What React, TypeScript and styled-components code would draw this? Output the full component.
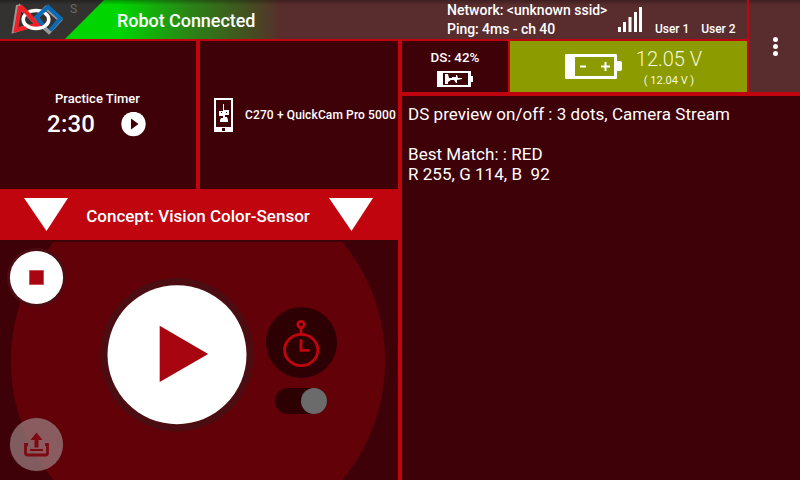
import React from "react";
import styled, { createGlobalStyle } from "styled-components";

const red = "#c0050f";
const dark = "#3f0108";
const brown = "#592c2d";

const GlobalStyle = createGlobalStyle`
  * { box-sizing: border-box; }
  body { margin: 0; background: ${dark}; }
`;

const Screen = styled.div`
  width: 800px;
  height: 480px;
  display: grid;
  grid-template-columns: 398px 4px 345px 2px 51px;
  grid-template-rows: 39px 2px 51px 4px 384px;
  overflow: hidden;
  background: ${red};
  color: #fff;
  font-family: Roboto, "Liberation Sans", sans-serif;
`;

const Header = styled.header`
  grid-column: 1 / 4;
  grid-row: 1;
  display: flex;
  background: linear-gradient(rgba(0, 0, 0, 0.3), rgba(0, 0, 0, 0) 5px), ${brown};
`;

const Brand = styled.div`
  width: 104px;
  height: 39px;
  background: linear-gradient(rgba(0, 0, 0, 0.3), rgba(0, 0, 0, 0) 5px), #333230;
  clip-path: polygon(0 0, 104px 0, 65px 39px, 0 39px);
  display: flex;
`;

const BrandMark = styled.svg`
  flex: none;
  margin-left: 8px;
`;

const BrandLetter = styled.span`
  font-size: 12px;
  line-height: 14px;
  padding: 2px 0 0 6px;
  color: #6b6a68;
`;

const Status = styled.div`
  width: 330px;
  height: 39px;
  margin-left: -39px;
  padding-left: 52px;
  clip-path: polygon(39px 0, 100% 0, 100% 100%, 0 100%);
  background:
    linear-gradient(rgba(0, 0, 0, 0.3), rgba(0, 0, 0, 0) 5px),
    linear-gradient(90deg, #00d500 0, #00d500 54px, #2b8417 125px, #42521f 180px, ${brown} 218px);
`;

const Text = styled.div<{ $size: number; $line: number; $weight?: number; $track?: number }>`
  font-size: ${(p) => p.$size}px;
  line-height: ${(p) => p.$line}px;
  font-weight: ${(p) => p.$weight ?? 500};
  letter-spacing: ${(p) => p.$track ?? 0}px;
  white-space: pre;
`;

const Network = styled.div`
  margin-left: 52px;
  width: 170px;
  padding-top: 1px;
`;

const Users = styled.div`
  display: flex;
  gap: 12px;
  padding: 22px 0 0 13px;
`;

const Meters = styled.div`
  grid-column: 3;
  grid-row: 3;
  display: flex;
  gap: 2px;
`;

const PhoneMeter = styled.div`
  width: 106px;
  background: ${dark};
  display: flex;
  flex-direction: column;
  align-items: center;
  gap: 5px;
  padding-top: 8px;
`;

const RobotMeter = styled.div`
  width: 237px;
  background: #8b9b00;
  display: flex;
  padding: 12px 0 0 55px;
`;

const Volts = styled.div`
  width: 84px;
  margin: -7px 0 0 5px;
  text-align: center;
  color: #f5f7dc;
`;

const MenuButton = styled.button`
  grid-column: 5;
  grid-row: 1 / 4;
  border: 0;
  padding: 0 0 0 2px;
  background: linear-gradient(rgba(0, 0, 0, 0.3), rgba(0, 0, 0, 0) 5px), ${brown};
  display: flex;
  flex-direction: column;
  align-items: center;
  justify-content: center;
  gap: 2px;
`;

const Dot = styled.i`
  width: 5px;
  height: 5px;
  border-radius: 50%;
  background: #fff;
`;

const LeftColumn = styled.div`
  grid-column: 1;
  grid-row: 3 / 6;
  display: flex;
  flex-direction: column;
`;

const Cards = styled.div`
  display: flex;
  flex: none;
  gap: 4px;
  height: 148px;
`;

const TimerCard = styled.div`
  width: 196px;
  background: ${dark};
  padding: 50px 0 0 47px;
`;

const TimerTitle = styled.div`
  padding-left: 8px;
`;

const TimerRow = styled.div`
  display: flex;
  align-items: center;
  gap: 26px;
  height: 34px;
`;

const CameraCard = styled.div`
  width: 198px;
  background: ${dark};
  display: flex;
  gap: 12px;
  padding: 57px 0 0 14px;
`;

const CameraName = styled.div`
  padding-top: 8px;
`;

const OpMode = styled.div`
  flex: none;
  height: 51px;
  display: flex;
  align-items: flex-start;
  padding: 9px 0 0 24px;
`;

const OpName = styled.div`
  width: 261px;
  text-align: center;
  padding: 7px 1px 0 0;
`;

const Control = styled.div`
  flex: 1;
  background: radial-gradient(circle at 198px 119px, #620108 186.5px, ${dark} 187.5px);
  border-top: 2px solid #3b0207;
  display: flex;
`;

const SideButtons = styled.div`
  width: 75px;
  height: 238px;
  padding: 4px 0 4px 5px;
  display: flex;
  flex-direction: column;
  justify-content: space-between;
`;

const PlayWrap = styled.div`
  width: 154px;
  padding: 35px 0 0 25px;
`;

const TimerControl = styled.div`
  padding: 65px 0 0 37px;
  display: flex;
  flex-direction: column;
  gap: 10px;
`;

const Switch = styled.div`
  width: 52px;
  height: 26px;
  margin-left: 9px;
  border-radius: 13px;
  background: #2d0003;
  display: flex;
  justify-content: flex-end;
`;

const Knob = styled.div`
  width: 26px;
  height: 26px;
  border-radius: 50%;
  background: #6b6b6b;
`;

const Telemetry = styled.main`
  grid-column: 3 / 6;
  grid-row: 5;
  background: ${dark};
  padding: 8px 6px;
`;

const FirstLogo = () => (
  <BrandMark width="56" height="38" viewBox="8 0 56 38" fill="none">
    <g stroke="#969998" strokeWidth="4">
      <path d="M18 5L14 31L30 26M18 5L39 26" />
      <path d="M34 20L46 8L60 20L49 32L40 24" />
    </g>
    <path d="M20 6L16 30L36 25M20 6L40 27" stroke="#ef2028" strokeWidth="4.200" />
    <ellipse cx="36" cy="19.500" rx="12.800" ry="9" stroke="#fff" strokeWidth="3.600" />
    <path d="M20 6L32 18" stroke="#ef2028" strokeWidth="4.200" />
    <path d="M43 25L36.500 17L48 7L60.500 18.500L50 30.500" stroke="#086bb8" strokeWidth="4" />
  </BrandMark>
);

const Signal = () => (
  <svg width="25" height="39" viewBox="617 0 25 39" fill="#fff">
    <path d="M618 27h3v5h-3zM623 22h3v10h-3zM628.500 17h3v15h-3zM634 12h3v20h-3zM639 7h3v25h-3z" />
  </svg>
);

const PhoneBattery = () => (
  <svg width="36" height="16" viewBox="0 0 36 16" fill="#fff">
    <path fillRule="evenodd" d="M0 0h34v5h2v6h-2v5H0zM6 2v12h25V2z" />
    <path d="M8 3h3l1 4h3V6h4V4h1l1 3h4v1l-5 1v3h-1l-2-3h-3l-3 2v2H8z" />
  </svg>
);

const RobotBattery = () => (
  <svg width="57" height="27" viewBox="0 0 57 27" fill="#fff">
    <path fillRule="evenodd" d="M0 2Q0 1 1 1h50q1 0 1 1v6h3q2 0 2 2v6q0 2-2 2h-3v7q0 1-1 1H1q-1 0-1-1zM10 4v19h39V4z" />
    <path d="M15 12.500h6v2h-6zM36 12.500h3.500V9h2v3.500H45v2h-3.500V18h-2v-3.500H36z" />
  </svg>
);

const CameraPhone = () => (
  <svg width="19" height="34" viewBox="0 0 19 34" fill="#fff">
    <path fillRule="evenodd" d="M0 0h19v34H0zM2 2v27h15V2zM8 30v3h3v-3z" />
    <path d="M9 6h1v6h5v5h-4v2h2l1 3v2H6v-2l1-2h2v-2H5v-5h4z" />
    <path d="M7 14h1v1H7zM12 14h1v1h-1z" fill={dark} />
  </svg>
);

const Triangle = () => (
  <svg width="44" height="34" viewBox="0 0 44 34">
    <path d="M0 0h44L22.500 33z" fill="#fff" />
  </svg>
);

const StopIcon = () => (
  <svg width="63" height="63" viewBox="0 0 63 63">
    <circle cx="31.500" cy="31.500" r="29.500" fill="#4b0c12" />
    <circle cx="31.500" cy="31.500" r="26.600" fill="#fff" />
    <path d="M24.500 24.500h14v14h-14z" fill="#a7050f" stroke="#c55258" />
  </svg>
);

const UploadIcon = () => (
  <svg width="63" height="63" viewBox="0 0 63 63">
    <circle cx="31.500" cy="31.500" r="28" fill="#4b0c12" opacity=".25" />
    <circle cx="31.500" cy="31.500" r="26.600" fill="#b0a0a0" opacity=".57" />
    <path d="M23 31.500h-2.500V40q0 2 2 2h18q2 0 2-2V31.500H40" fill="none" stroke="#7d0912" strokeWidth="2.800" />
    <path d="M25 37h13" stroke="#7d0912" strokeWidth="2" />
    <path d="M31.500 19.500l6 7.500H33.500v7.500h-4v-7.500H25.500z" fill="#7d0912" />
  </svg>
);

const PlayIcon = () => (
  <svg width="156" height="156" viewBox="0 0 156 156">
    <circle cx="77" cy="77.700" r="76.700" fill="#4b0c12" />
    <circle cx="77" cy="77.700" r="69.500" fill="#fff" />
    <path d="M59.700 48.800L108.200 77L59.700 105z" fill="#a7050f" />
  </svg>
);

const TimerIcon = () => (
  <svg width="71" height="71" viewBox="0 0 71 71">
    <circle cx="35.500" cy="35.500" r="35.500" fill="#2d0003" />
    <g fill="none" stroke={red} strokeWidth="2.800" strokeLinecap="round">
      <ellipse cx="35.200" cy="43" rx="16.600" ry="15.700" />
      <circle cx="35" cy="17.500" r="3.200" />
      <path d="M35 21.500V27M35 33.500V43.300H42.500" />
    </g>
  </svg>
);

const SmallPlay = () => (
  <svg width="25" height="25" viewBox="0 0 25 25">
    <circle cx="12.500" cy="12" r="12.200" fill="#fff" />
    <path d="M10 6.500l7.500 5.500L10 17.500z" fill={dark} />
  </svg>
);

export default function App() {
  return (
    <Screen>
      <GlobalStyle />
      <Header>
        <Brand>
          <FirstLogo />
          <BrandLetter>S</BrandLetter>
        </Brand>
        <Status>
          <Text $size={18} $line={41} $track={-0.05}>Robot Connected</Text>
        </Status>
        <Network>
          <Text $size={14} $line={19}>{"Network: <unknown ssid>"}</Text>
          <Text $size={14} $line={19} $track={-0.05}>Ping: 4ms - ch 40</Text>
        </Network>
        <Signal />
        <Users>
          <Text $size={12} $line={14} $track={-0.05}>User 1</Text>
          <Text $size={12} $line={14} $track={-0.05}>User 2</Text>
        </Users>
      </Header>
      <Meters>
        <PhoneMeter>
          <Text $size={13.4} $line={17}>DS: 42%</Text>
          <PhoneBattery />
        </PhoneMeter>
        <RobotMeter>
          <RobotBattery />
          <Volts>
            <Text $size={20} $line={26} $weight={300}>12.05 V</Text>
            <Text $size={11} $line={17} $weight={400}>( 12.04 V )</Text>
          </Volts>
        </RobotMeter>
      </Meters>
      <MenuButton>
        <Dot />
        <Dot />
        <Dot />
      </MenuButton>
      <LeftColumn>
        <Cards>
          <TimerCard>
            <TimerTitle>
              <Text $size={13} $line={16}>Practice Timer</Text>
            </TimerTitle>
            <TimerRow>
              <Text $size={24} $line={34} $track={0.25}>2:30</Text>
              <SmallPlay />
            </TimerRow>
          </TimerCard>
          <CameraCard>
            <CameraPhone />
            <CameraName>
              <Text $size={12} $line={18} $track={0.12}>C270 + QuickCam Pro 5000</Text>
            </CameraName>
          </CameraCard>
        </Cards>
        <OpMode>
          <Triangle />
          <OpName>
            <Text $size={17} $line={22}>Concept: Vision Color-Sensor</Text>
          </OpName>
          <Triangle />
        </OpMode>
        <Control>
          <SideButtons>
            <StopIcon />
            <UploadIcon />
          </SideButtons>
          <PlayWrap>
            <PlayIcon />
          </PlayWrap>
          <TimerControl>
            <TimerIcon />
            <Switch>
              <Knob />
            </Switch>
          </TimerControl>
        </Control>
      </LeftColumn>
      <Telemetry>
        <Text $size={17} $line={20} $weight={400} $track={0.035}>
          {"DS preview on/off : 3 dots, Camera Stream\n\nBest Match: : RED\nR 255, G 114, B  92"}
        </Text>
      </Telemetry>
    </Screen>
  );
}
